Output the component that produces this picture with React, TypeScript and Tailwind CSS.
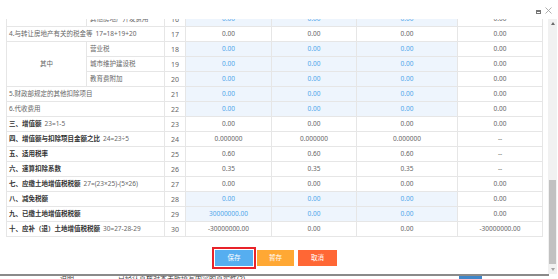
import React from "react";

type Row = {
  no: number;
  label?: React.ReactNode;
  sub?: string;
  group?: number; // rowSpan of the 其中 cell
  blankFirst?: boolean;
  inGroup?: boolean;
  vals: string[];
  edit?: boolean[];
};

const E3 = [true, true, true];

function Lbl({ bold, text, formula }: { bold?: boolean; text: string; formula?: string }) {
  return (
    <>
      <span className={bold ? "font-bold text-[#333]" : ""}>{text}</span>
      {formula && <span className="ml-[3px]">{formula}</span>}
    </>
  );
}

const rows: Row[] = [
  { no: 16, blankFirst: true, sub: "其他房地产开发费用", vals: ["0.00", "0.00", "0.00", "0.00"], edit: E3 },
  { no: 17, label: <Lbl text="4.与转让房地产有关的税金等" formula="17=18+19+20" />, vals: ["0.00", "0.00", "0.00", "0.00"] },
  { no: 18, group: 3, sub: "营业税", vals: ["0.00", "0.00", "0.00", "0.00"], edit: E3 },
  { no: 19, inGroup: true, sub: "城市维护建设税", vals: ["0.00", "0.00", "0.00", "0.00"], edit: E3 },
  { no: 20, inGroup: true, sub: "教育费附加", vals: ["0.00", "0.00", "0.00", "0.00"], edit: E3 },
  { no: 21, label: <Lbl text="5.财政部规定的其他扣除项目" />, vals: ["0.00", "0.00", "0.00", "0.00"], edit: E3 },
  { no: 22, label: <Lbl text="6.代收费用" />, vals: ["0.00", "0.00", "0.00", "0.00"], edit: E3 },
  { no: 23, label: <Lbl bold text="三、增值额" formula="23=1-5" />, vals: ["0.00", "0.00", "0.00", "0.00"] },
  { no: 24, label: <Lbl bold text="四、增值额与扣除项目金额之比" formula="24=23÷5" />, vals: ["0.000000", "0.000000", "0.000000", "--"] },
  { no: 25, label: <Lbl bold text="五、适用税率" />, vals: ["0.60", "0.60", "0.60", "--"] },
  { no: 26, label: <Lbl bold text="六、速算扣除系数" />, vals: ["0.35", "0.35", "0.35", "--"] },
  { no: 27, label: <Lbl bold text="七、应缴土地增值税税额" formula="27=(23×25)-(5×26)" />, vals: ["0.00", "0.00", "0.00", "0.00"] },
  { no: 28, label: <Lbl bold text="八、减免税额" />, vals: ["0.00", "0.00", "0.00", "0.00"], edit: E3 },
  { no: 29, label: <Lbl bold text="九、已缴土地增值税税额" />, vals: ["30000000.00", "0.00", "0.00", "0.00"], edit: E3 },
  { no: 30, label: <Lbl bold text="十、应补（退）土地增值税税额" formula="30=27-28-29" />, vals: ["-30000000.00", "0.00", "0.00", "-30000000.00"] },
];

const cell = "border border-[#e6e6e6] h-[15px] p-0 leading-none";

function TaxTable() {
  return (
    <table className="table-fixed border-collapse w-[536px] text-[6.5px] text-[#666]">
      <colgroup>
        <col className="w-[80px]" />
        <col className="w-[78px]" />
        <col className="w-[21px]" />
        <col className="w-[86px]" />
        <col className="w-[85px]" />
        <col className="w-[101px]" />
        <col className="w-[85px]" />
      </colgroup>
      <tbody>
        {rows.map((r) => (
          <tr key={r.no} className="h-[15px]">
            {r.label ? (
              <td colSpan={2} className={`${cell} pl-[2px] text-left whitespace-nowrap`}>
                {r.label}
              </td>
            ) : (
              <>
                {r.blankFirst && <td className={cell} />}
                {r.group && (
                  <td rowSpan={r.group} className={`${cell} text-center`}>
                    其中
                  </td>
                )}
                <td className={`${cell} pl-[3px] text-left whitespace-nowrap`}>{r.sub}</td>
              </>
            )}
            <td className={`${cell} text-center text-[7px]`}>{r.no}</td>
            {r.vals.map((v, i) => {
              const ed = r.edit?.[i];
              return (
                <td
                  key={i}
                  className={`${cell} text-center ${ed ? "bg-[#eef5fd] text-[#4ea6ea]" : "bg-white"}`}
                >
                  {v}
                </td>
              );
            })}
          </tr>
        ))}
      </tbody>
    </table>
  );
}

function ScrollBar() {
  return (
    <div className="w-[9px] h-full bg-[#f1f1f1] flex flex-col items-center">
      <div className="h-[9px] w-full flex items-center justify-center">
        <div className="w-0 h-0 border-l-[2px] border-r-[2px] border-b-[3px] border-l-transparent border-r-transparent border-b-[#6b6b6b]" />
      </div>
      <div className="h-[152px]" />
      <div className="h-[84px] w-[7px] bg-[#c1c1c1]" />
      <div className="flex-1" />
      <div className="h-[9px] w-full flex items-center justify-center">
        <div className="w-0 h-0 border-l-[2px] border-r-[2px] border-t-[3px] border-l-transparent border-r-transparent border-t-[#a3a3a3]" />
      </div>
    </div>
  );
}

export default function App() {
  return (
    <div className="w-[558px] h-[279px] overflow-hidden bg-white font-['Noto_Sans','Noto_Sans_CJK_SC',sans-serif]">
      {/* dialog header */}
      <div className="h-[19px] flex items-center justify-end gap-[4px] pr-[6px]">
        <div className="w-[5px] h-[4px] border border-[#777] border-t-2 mt-[5px]" />
        <svg width="7" height="7" viewBox="0 0 7 7" className="mt-[2px]">
          <path d="M0.5 0.5 L6.5 6.5 M6.5 0.5 L0.5 6.5" stroke="#9a9a9a" strokeWidth="0.8" />
        </svg>
      </div>

      {/* dialog body */}
      <div className="h-[255px] flex">
        <div className="flex-1 overflow-hidden">
          <div className="-mt-[8px] pl-[6px]">
            <TaxTable />
          </div>
          <div className="flex justify-center gap-[4px] mt-[13px] pl-[4px]">
            <button className="w-[38px] h-[16px] bg-[#56aef0] text-white text-[6.5px] outline-2 outline-offset-[1px] outline-[#e8232a]">
              保存
            </button>
            <button className="w-[37px] h-[16px] bg-[#ffa834] text-white text-[6.5px]">暂存</button>
            <button className="w-[39px] h-[16px] bg-[#ff6735] text-white text-[6.5px]">取消</button>
          </div>
        </div>
        <ScrollBar />
        <div className="w-[1px]" />
      </div>

      {/* page behind the dialog */}
      <div className="h-[2px] bg-[#8a8a8a] mr-[9px]" />
      <div className="h-[3px] overflow-hidden flex items-start text-[7px] text-[#444] leading-none">
        <span className="ml-[60px] -mt-[1px]">说明</span>
        <span className="ml-[44px] -mt-[1px]">已经认真核对本表所填写内容的真实性(2)</span>
        <span className="ml-[214px] w-[23px] h-[3px] bg-[#3f86c9]" />
      </div>
    </div>
  );
}
